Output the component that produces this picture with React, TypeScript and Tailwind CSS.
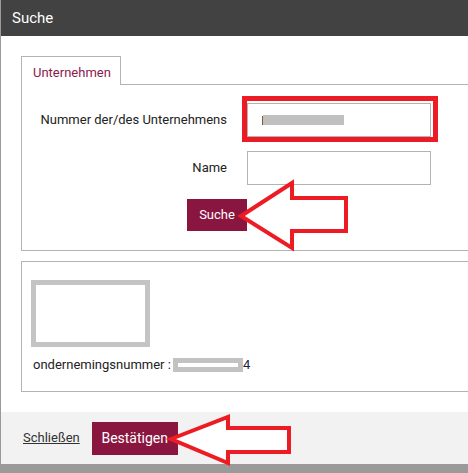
import React from "react";

export default function App() {
  return (
    <div className="relative w-[468px] h-[473px] overflow-hidden bg-[#9a9a9a] font-['Roboto',sans-serif] text-[#222]">
      <div className="ml-[1px] w-[540px] flex flex-col">
        <div className="h-[36px] bg-[#424242] pl-[11px] flex items-center text-white text-[15px]">Suche</div>
        <div className="bg-white pt-[20px] pl-[20px] pb-[20px]">
          <div className="relative z-10 -mb-px w-[100px] h-[29px] border border-b-0 border-[#b3b3b3] bg-white pl-[11px] pt-[6px] text-[13px] text-[#8b1a4b]">
            Unternehmen
          </div>
          <div className="border border-[#b3b3b3] pt-[18px] pb-[19px] flex flex-col gap-[14px]">
            <div className="flex items-center">
              <div className="w-[225px] pr-[20px] text-right text-[13px]">Nummer der/des Unternehmens</div>
              <div className="relative w-[184px] h-[34px] border border-[#b3b3b3] flex items-center pl-[14px]">
                <div className="w-px h-[9px] bg-[#8a5a20]"></div>
                <div className="w-[81px] h-[10px] bg-[#c0c0c0]"></div>
                <div className="absolute -left-[6px] -top-[8px] -right-[8px] -bottom-[6px] border-[5px] border-[#ed1c24]"></div>
              </div>
            </div>
            <div className="flex items-center">
              <div className="w-[225px] pr-[20px] text-right text-[13px]">Name</div>
              <div className="w-[184px] h-[34px] border border-[#b3b3b3]"></div>
            </div>
            <div className="flex">
              <div className="w-[225px] flex justify-end">
                <button className="w-[60px] h-[32px] bg-[#8a1640] text-white text-[13px]">Suche</button>
              </div>
            </div>
          </div>
          <div className="mt-[10px] border border-[#b3b3b3] pt-[18px] pl-[9px] pb-[18px]">
            <div className="w-[119px] h-[67px] border-[5px] border-[#c4c4c4]"></div>
            <div className="mt-[10px] flex items-center text-[13px] h-[16px]">
              <span className="ml-[2px]">ondernemingsnummer :</span>
              <div className="ml-[2px] w-[70px] h-[14px] bg-[#c2c2c2] flex items-center justify-center">
                <div className="w-[60px] h-[4px] bg-white"></div>
              </div>
              <span className="text-[#1c2340]">4</span>
            </div>
          </div>
        </div>
        <div className="h-[52px] bg-[#f2f2f2] flex items-center pl-[22px] gap-[12px]">
          <a className="underline text-[13px] text-[#333]">Schließen</a>
          <button className="w-[86px] h-[33px] bg-[#8a1640] text-white text-[14px]">Bestätigen</button>
        </div>
      </div>
      <svg className="absolute left-0 top-0 pointer-events-none" width="468" height="473" viewBox="0 0 468 473">
        <polygon
          points="241,216 292,183 292,198 346,198 346,231 292,231 292,248"
          fill="white"
          stroke="#ed1c24"
          strokeWidth="4"
          strokeLinejoin="miter"
        />
        <polygon
          points="171,439 228,417 228,428 289,428 289,452 228,452 228,463"
          fill="white"
          stroke="#ed1c24"
          strokeWidth="4"
          strokeLinejoin="miter"
        />
      </svg>
    </div>
  );
}
